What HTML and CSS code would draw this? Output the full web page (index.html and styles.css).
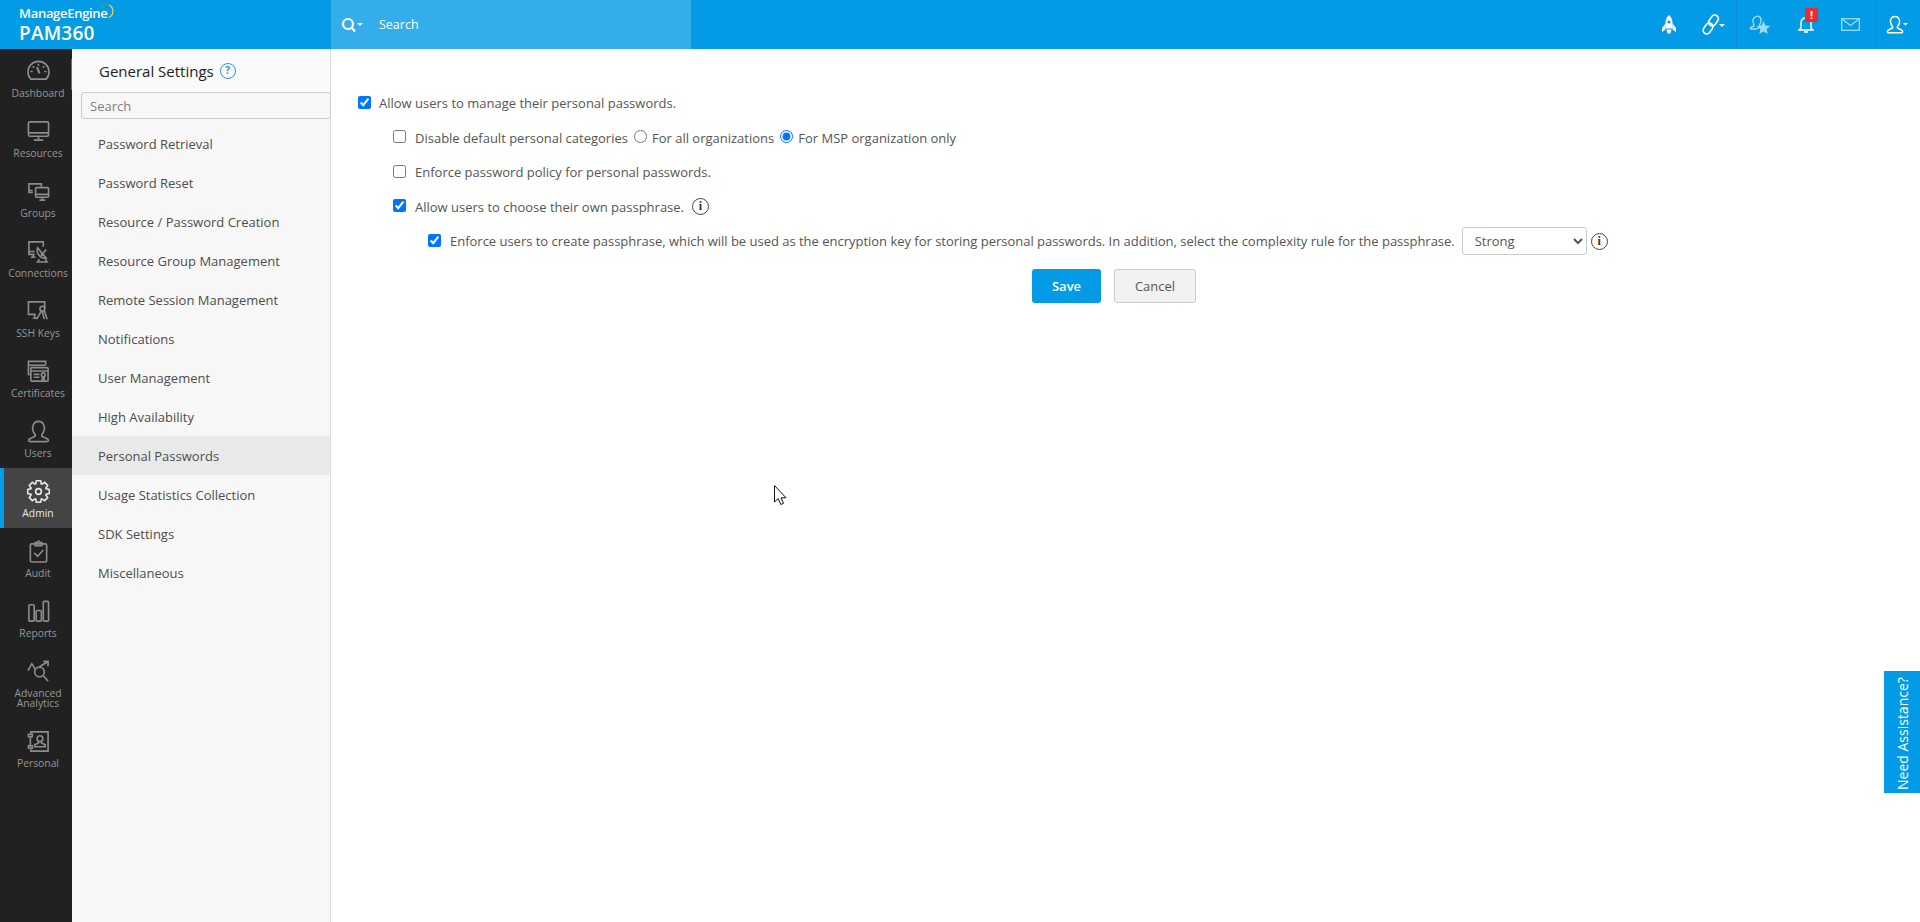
FILE: index.html
```html
<!DOCTYPE html>
<html lang="en">
<head>
<meta charset="utf-8">
<title>PAM360 - General Settings</title>
<link rel="stylesheet" href="styles.css">
</head>
<body>
<header class="topbar">
  <div class="brand">
    <div class="brand-me">ManageEngine<svg class="arc" viewBox="0 0 15 15" width="15" height="15" fill="none" stroke-width="1.2" stroke-linecap="round"><path d="M1 4 A7 7 0 0 1 5 1.2" stroke="#3fb56b"/><path d="M5 1.200 A7 7 0 0 1 9.500 1.200" stroke="#e8503a"/><path d="M9.500 1.200 A7 7 0 0 1 9 13.500" stroke="#f5d631"/></svg></div>
    <div class="brand-name">PAM360</div>
  </div>
  <div class="topsearch">
    <svg width="22" height="16" viewBox="0 0 22 16" fill="none" stroke="#fff"><circle cx="7" cy="7" r="5" stroke-width="2.2"/><path d="M10.5 10.5 L14 14.5" stroke-width="2.4"/><path d="M16 6h6l-3 3z" fill="#fff" stroke="none"/></svg>
    <span>Search</span>
  </div>
  <div class="topicons">
    <div class="ti ti-a"><svg width="14" height="19" viewBox="0 0 14 19" fill="#fff"><path d="M7 0 C9.500 2 10.500 5 10.500 8 V13.500 H3.500 V8 C3.500 5 4.500 2 7 0Z"/><path d="M3.500 8.500 L0 13 V17 L3.500 14.500Z M10.500 8.500 L14 13 V17 L10.500 14.500Z"/><path d="M4.500 14.500h5l-1 4h-3z"/><circle cx="7" cy="7" r="1.600" fill="#039be5"/></svg></div>
    <div class="ti ti-b"><svg width="24" height="22" viewBox="0 0 24 22" fill="none" stroke="#fff" stroke-width="1.700"><rect x="-3.600" y="-5.800" width="7.200" height="11.600" rx="3.600" transform="translate(6 14.500) rotate(35)"/><rect x="-3.600" y="-5.800" width="7.200" height="11.600" rx="3.600" transform="translate(11.500 6.500) rotate(35)"/><path d="M17 10h6l-3 3z" fill="#fff" stroke="none"/></svg></div>
    <div class="ti ti-c"><svg width="22" height="22" viewBox="0 0 22 22" fill="none" stroke="#9adcf8" stroke-width="1.400"><path d="M6 3 C9 1 12.500 2.500 12 7 C11.800 9 11 10 10.500 11 L10.500 13 L7 15 H2 C1 15 1 13.500 2.500 13 L5 12 L5 10.500 C3.500 8 3.500 5 6 3Z"/><path d="M14.500 7 L16.400 11.600 L21.200 12 L17.600 15.200 L18.700 20 L14.500 17.400 L10.300 20 L11.400 15.200 L7.800 12 L12.600 11.600Z" fill="#9adcf8" stroke="none"/></svg></div>
    <div class="ti ti-d"><svg width="16" height="19" viewBox="0 0 16 19" fill="none" stroke="#fff" stroke-width="1.500"><path d="M3 13 V8 C3 5 5 3 8 3 C11 3 13 5 13 8 V13 L15 15 H1Z"/><path d="M6 17h4" stroke-width="1.600"/></svg><span class="badge">!</span></div>
    <div class="ti ti-d ti-mail"><svg width="19" height="13" viewBox="0 0 19 13" fill="none" stroke="#9adcf8" stroke-width="1.300"><rect x="0.700" y="0.700" width="17.600" height="11.600"/><path d="M1 1 L9.500 7.500 L18 1"/></svg></div>
    <div class="ti ti-e"><svg width="22" height="20" viewBox="0 0 22 20" fill="none" stroke="#fff" stroke-width="1.500"><path d="M9 1.500 C12.500 1.500 14 4.500 13.500 7.500 C13.200 9 12.500 10.500 11.500 11.500 V13 L15.500 15 C17 15.700 17 17.800 15.500 17.800 H2.500 C1 17.800 1 15.700 2.500 15 L6.500 13 V11.500 C5.500 10.500 4.800 9 4.500 7.500 C4 4.500 5.500 1.500 9 1.500Z"/><path d="M17 8h5l-2.500 2.500z" fill="#fff" stroke="none"/></svg></div>
  </div>
</header>

<div class="shell">
  <nav class="rail">
    <a class="rail-item"><svg class="ri" viewBox="0 0 24 24"><path d="M4 20 A11 11 0 1 1 20 20 Z"/><path d="M12 4v2M3.500 12H6M20.500 12H18M6 6.500l1.500 1.500M18 6.500l-1.500 1.500"/><path d="M10.500 7.500 L13 14" stroke-width="2.200"/></svg><span>Dashboard</span></a>
    <a class="rail-item"><svg class="ri" viewBox="0 0 24 24"><rect x="1.500" y="2" width="21" height="15" rx="1.500"/><path d="M1.500 13.500h21M12 17v3M7 21h10"/></svg><span>Resources</span></a>
    <a class="rail-item"><svg class="ri" viewBox="0 0 24 24"><path d="M6 13H2V4h13v3"/><path d="M2 11h4"/><rect x="9" y="8" width="13.500" height="10" rx="1"/><path d="M9 15h13.500M16 18v3M13 21h6"/></svg><span>Groups</span></a>
    <a class="rail-item"><svg class="ri" viewBox="0 0 24 24"><path d="M8 15H2V2h15v5"/><path d="M2 12h6M4 18h5M6.500 15v3"/><path d="M11 8 A8.500 8.500 0 0 0 20 19 Z"/><circle cx="16" cy="15" r="1"/><path d="M16 15l4 -5M13 20l-2 3h10l-2 -3"/></svg><span>Connections</span></a>
    <a class="rail-item"><svg class="ri" viewBox="0 0 24 24"><path d="M9 15H1.500V2h17v7"/><path d="M6 19h5M8 15v4"/><circle cx="16" cy="9" r="2.500"/><path d="M15 11.500 L10 20M18 11l3 9M16 12l2 8"/></svg><span>SSH Keys</span></a>
    <a class="rail-item"><svg class="ri" viewBox="0 0 24 24"><path d="M3 15H1.500V1.500h18V5"/><path d="M1.500 5.500h18"/><rect x="4" y="8" width="18" height="14" rx="1"/><path d="M4 11.500h18M7 15h6M7 18h6"/><circle cx="17" cy="15.500" r="2"/><path d="M16 17.500v3l1 -1 1 1v-3"/></svg><span>Certificates</span></a>
    <a class="rail-item"><svg class="ri" viewBox="0 0 24 24"><path d="M12 1.500 C17 1.500 18.500 6 18 10 C17.700 12 16.500 14 15.500 15 V17 L21 19.500 C23 20.500 22.500 22.500 21 22.500 H3 C1.500 22.500 1 20.500 3 19.500 L8.500 17 V15 C7.500 14 6.300 12 6 10 C5.500 6 7 1.500 12 1.500Z"/></svg><span>Users</span></a>
    <a class="rail-item rail-active"><svg class="ri" viewBox="0 0 24 24"><circle cx="12" cy="12" r="3"/><polygon points="9.100,4 9.800,.7 14.200,.7 14.900,4 15.610,4.290 18.430,2.450 21.550,5.570 19.710,8.390 20,9.100 23.300,9.800 23.300,14.200 20,14.900 19.710,15.610 21.550,18.430 18.430,21.550 15.610,19.710 14.900,20 14.200,23.300 9.800,23.300 9.100,20 8.390,19.710 5.570,21.550 2.450,18.430 4.290,15.610 4,14.900 .7,14.200 .7,9.800 4,9.100 4.290,8.390 2.450,5.570 5.570,2.450 8.390,4.290"/></svg><span>Admin</span></a>
    <a class="rail-item"><svg class="ri" viewBox="0 0 24 24"><rect x="3.500" y="4" width="17" height="19" rx="1.500"/><path d="M8.500 4 V2.800 H10.500 L12 1 L13.500 2.800 H15.500 V6 H8.500Z"/><path d="M7.500 13.500 L11 17 L17 10.500"/></svg><span>Audit</span></a>
    <a class="rail-item"><svg class="ri" viewBox="0 0 24 24"><rect x="2" y="5" width="5.500" height="17" rx="1"/><rect x="9.500" y="11" width="5.500" height="11" rx="1"/><rect x="17" y="1.500" width="5.500" height="20.500" rx="1"/></svg><span>Reports</span></a>
    <a class="rail-item rail-two"><svg class="ri" viewBox="0 0 24 24"><circle cx="13" cy="12.500" r="5"/><path d="M1 11 L5 4 L9 10"/><path d="M13 7 L22 1.500 M17 1.500h5v5M17 16.500l5 5.500"/></svg><span>Advanced Analytics</span></a>
    <a class="rail-item"><svg class="ri" viewBox="0 0 24 24"><path d="M4 4V2h18v20H4v-2"/><circle cx="13.500" cy="9" r="3"/><path d="M12 12v1.500l-4 2v2h11v-2l-4-2V12"/><rect x="1.500" y="4.500" width="4" height="2.500"/><rect x="1.500" y="16.500" width="4" height="2.500"/><path d="M3.500 7v9.500"/></svg><span>Personal</span></a>
  </nav>

  <aside class="side">
    <div class="side-head">General Settings <span class="help">?</span></div>
    <input class="side-search" type="text" placeholder="Search">
    <ul class="side-menu">
      <li>Password Retrieval</li>
      <li>Password Reset</li>
      <li>Resource / Password Creation</li>
      <li>Resource Group Management</li>
      <li>Remote Session Management</li>
      <li>Notifications</li>
      <li>User Management</li>
      <li>High Availability</li>
      <li class="sel">Personal Passwords</li>
      <li>Usage Statistics Collection</li>
      <li>SDK Settings</li>
      <li>Miscellaneous</li>
    </ul>
  </aside>

  <main class="main">
    <div class="row top"><input type="checkbox" checked><label>Allow users to manage their personal passwords.</label></div>
    <div class="row lvl1"><input type="checkbox"><label>Disable default personal categories</label><input class="radio" type="radio" name="org"><label>For all organizations</label><input class="radio" type="radio" name="org" checked><label>For MSP organization only</label></div>
    <div class="row lvl1"><input type="checkbox"><label>Enforce password policy for personal passwords.</label></div>
    <div class="row lvl1"><input type="checkbox" checked><label>Allow users to choose their own passphrase.</label><span class="info info-a">i</span></div>
    <div class="row lvl2"><input type="checkbox" checked><label class="long">Enforce users to create passphrase, which will be used as the encryption key for storing personal passwords. In addition, select the complexity rule for the passphrase.</label><select class="pick"><option>Strong</option></select><span class="info info-b">i</span></div>
    <div class="actions"><button class="btn btn-save">Save</button><button class="btn btn-cancel">Cancel</button></div>
  </main>
</div>

<a class="assist">Need Assistance?</a>
<svg class="cursor" width="13" height="21" viewBox="0 0 13 21"><path d="M0.500 0.500 V17 L4.200 13.500 L6.800 19.500 L9.500 18.300 L7 12.800 H12Z" fill="#fff" stroke="#111" stroke-width="1"/></svg>
</body>
</html>
```
FILE: styles.css
```css
* { box-sizing: border-box; }
html, body { margin: 0; height: 100%; overflow: hidden; }
body { font-family: "Open Sans", "Liberation Sans", sans-serif; font-size: 13px; color: #555; background: #fff; }

.topbar { height: 49px; background: #039be5; display: flex; align-items: stretch; color: #fff; }
.brand { width: 331px; padding: 6px 0 0 19px; }
.brand-me { font-size: 13px; line-height: 15px; font-weight: 600; letter-spacing: -0.3px; position: relative; width: 96px; }
.arc { position: absolute; left: 81px; top: -2px; }
.brand-name { font-size: 19px; line-height: 24px; font-weight: 600; letter-spacing: 0.2px; }
.topsearch { width: 360px; background: #34adea; display: flex; align-items: center; padding-left: 10px; gap: 16px; font-size: 12.500px; }
.topicons { margin-left: auto; display: flex; }
.ti { display: flex; align-items: center; justify-content: center; position: relative; }
.ti-a { width: 44px; }
.ti-b { width: 46px; border-right: 1px solid #0a8fd2; }
.ti-c { width: 46px; }
.ti-d { width: 46px; }
.ti-mail { padding-right: 4px; }
.ti-e { width: 45px; border-left: 1px solid #0a8fd2; padding-right: 2px; }
.badge { position: absolute; left: 22px; top: 8px; width: 13px; height: 14px; background: #f3282a; border-radius: 2px; font-size: 11px; line-height: 14px; font-weight: 700; text-align: center; }

.shell { display: flex; height: 873px; }
.rail { width: 72px; background: #212121; display: flex; flex-direction: column; }
.rail-item { height: 60px; display: flex; flex-direction: column; align-items: center; color: #969696; font-size: 10.300px; line-height: 10px; text-align: center; padding: 12px 0 0 4px; }
.rail-item:first-child { height: 59px; padding-top: 11px; }
.rail-item span { margin-top: 5px; display: block; }
.rail-two { height: 70px; }
.rail-two span { width: 60px; }
.ri { width: 23px; height: 23px; fill: none; stroke: #8c8c8c; stroke-width: 1.700; flex: none; }
.rail-active { background: #444; color: #e8e8e8; border-left: 4px solid #039be5; padding-left: 0; }
.rail-active .ri { stroke: #e8e8e8; }

.side { width: 259px; background: #f7f7f7; border-right: 1px solid #ddd; position: relative; }
.side::before { content: ""; position: absolute; left: -1px; top: 10px; width: 1px; height: 31px; background: #6e6e6e; }
.side-head { height: 43px; padding: 11px 0 0 27px; font-size: 15px; line-height: 22px; color: #222; background: #fafafa; display: flex; align-items: flex-start; gap: 6px; }
.help { width: 16px; height: 16px; margin-top: 3px; border: 1.500px solid #1e9be0; border-radius: 50%; color: #1e9be0; font-size: 10px; line-height: 13px; font-weight: 700; text-align: center; }
.side-search { display: block; margin-left: 9px; width: 250px; height: 27px; border: 1px solid #ccc; border-radius: 3px; background: #f7f7f7; padding: 0 8px; font: 13px "Open Sans", sans-serif; color: #555; outline: none; position: relative; }
.side-search::placeholder { color: #808080; opacity: 1; }
.side-menu { list-style: none; margin: 5px 0 0; padding: 0; }
.side-menu li { height: 39px; line-height: 40px; padding-left: 26px; color: #4d4d4d; }
.side-menu .sel { background: #e9e9e9; }

.main { flex: 1; padding: 37px 50px 0 27px; }
.row { height: 34.500px; display: flex; align-items: center; white-space: nowrap; }
.row input[type=checkbox] { margin: 0 9px 0 0; width: 13px; height: 13px; accent-color: #0075ff; flex: none; position: relative; top: -1px; }
.top input[type=checkbox] { margin-right: 8px; }
.row .radio { margin: 0 5px 0 6px; width: 13px; height: 13px; flex: none; accent-color: #0075ff; position: relative; top: -1px; }
.long { letter-spacing: -0.015px; }
.lvl1 { padding-left: 35px; }
.lvl2 { padding-left: 70px; }
.info { width: 17px; height: 17px; border: 1.400px solid #444; border-radius: 50%; color: #333; font: 700 12px/14px "Liberation Serif", serif; text-align: center; flex: none; }
.info-a { margin-left: 8px; }
.info-b { margin-left: 4px; }
.pick { width: 125px; height: 28px; margin-left: 7px; border: 1px solid #ccc; border-radius: 3px; background: #fff; padding-left: 8px; font: 13px "Open Sans", sans-serif; color: #555; }
.actions { display: flex; justify-content: center; gap: 13px; margin-top: 10.500px; }
.btn { height: 34px; border-radius: 3px; font: 13px "Open Sans", sans-serif; padding: 0; }
.btn-save { width: 69px; background: #039be5; border: 0; color: #fff; font-weight: 600; }
.btn-cancel { width: 82px; background: #f2f2f2; border: 1px solid #ccc; color: #555; }

.assist { position: absolute; right: 0; top: 671px; width: 36px; height: 122px; background: #039be5; color: #fff; font-size: 14px; writing-mode: vertical-rl; transform: rotate(180deg); display: flex; align-items: center; justify-content: center; padding-bottom: 4px; }
.cursor { position: absolute; left: 774px; top: 485px; }
```
